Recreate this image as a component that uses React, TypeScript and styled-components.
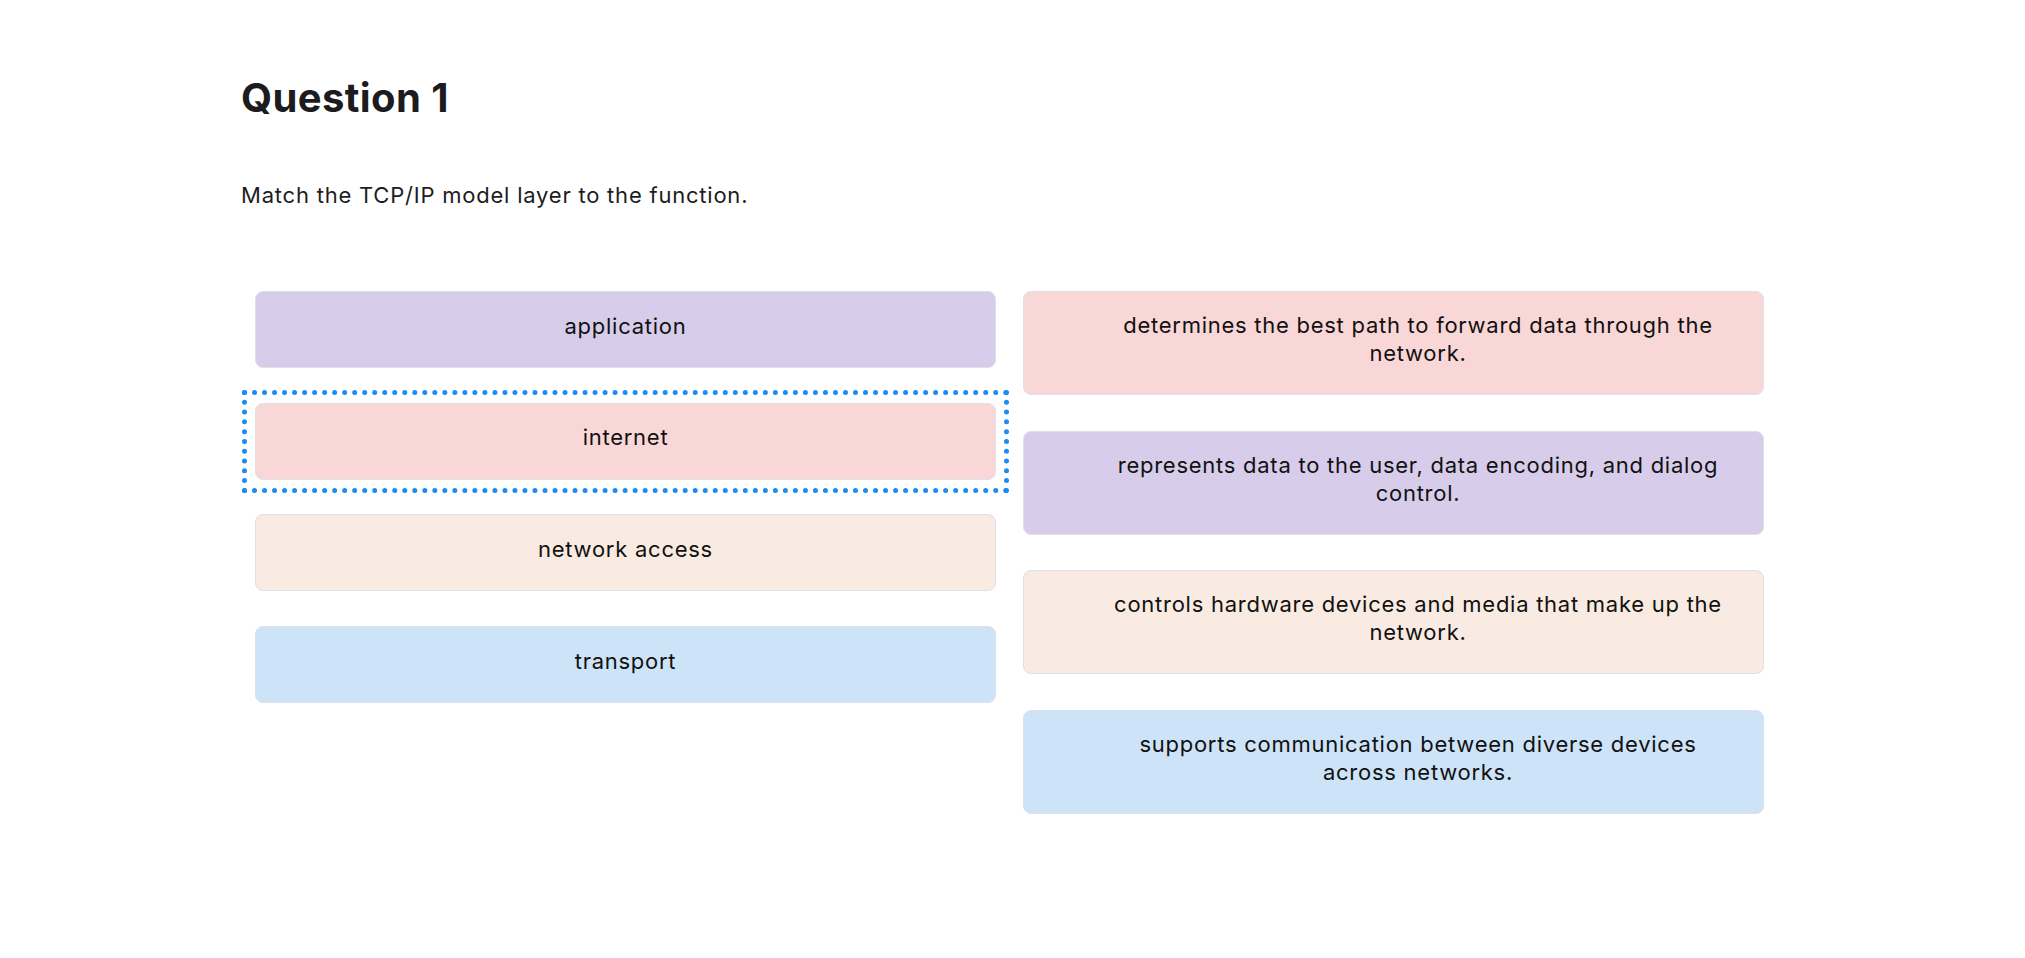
import React from "react";
import styled, { createGlobalStyle } from "styled-components";

type Tone = "purple" | "pink" | "beige" | "blue";

const tones: Record<Tone, string> = {
    purple: "#d7cdeb",
    pink: "#f9d7d6",
    beige: "#f9ebe1",
    blue: "#cde3f8",
};

const GlobalStyle = createGlobalStyle`
    html, body {
        margin: 0;
        padding: 0;
        background: #ffffff;
    }

    body {
        font-family: Inter, "Noto Sans", sans-serif;
        color: #1d1d21;
    }
`;

const Page = styled.main`
    padding: 74px 0 0 241px;
`;

const Title = styled.h1`
    margin: 0;
    font-size: 40px;
    font-weight: 700;
    line-height: 48px;
    letter-spacing: 0.4px;
    color: #1b1b20;
`;

const Prompt = styled.p`
    margin: 59px 0 0;
    font-size: 22px;
    line-height: 28px;
    letter-spacing: 0.78px;
`;

const Board = styled.div`
    display: grid;
    grid-template-columns: 741px 741px;
    column-gap: 27px;
    align-items: start;
    margin: 82px 0 0 14px;
`;

const Column = styled.div<{ $gap: number }>`
    display: flex;
    flex-direction: column;
    gap: ${(p) => p.$gap}px;
`;

const Tile = styled.div<{ $tone: Tone; $focused?: boolean }>`
    position: relative;
    box-sizing: border-box;
    display: flex;
    align-items: center;
    justify-content: center;
    border: 1px solid #dfe0e8;
    border-radius: 8px;
    background: ${(p) => tones[p.$tone]};
    color: #111111;
    font-size: 22px;
    line-height: 28px;
    letter-spacing: 0.74px;
    text-align: center;
    cursor: grab;

    /* keyboard focus ring: square dotted box around the tile */
    &::after {
        content: "";
        display: ${(p) => (p.$focused ? "block" : "none")};
        position: absolute;
        inset: -14px;
        border: 5px dotted #1a8cf5;
        pointer-events: none;
    }
`;

const LayerTile = styled(Tile)`
    height: 77px;
    padding: 0 20px 8px;
`;

const FunctionTile = styled(Tile)`
    height: 104px;
    padding: 0 36px 8px 85px;
`;

const layers: { label: string; tone: Tone }[] = [
    { label: "application", tone: "purple" },
    { label: "internet", tone: "pink" },
    { label: "network access", tone: "beige" },
    { label: "transport", tone: "blue" },
];

const functions: { label: string; tone: Tone }[] = [
    { label: "determines the best path to forward data through the network.", tone: "pink" },
    { label: "represents data to the user, data encoding, and dialog control.", tone: "purple" },
    { label: "controls hardware devices and media that make up the network.", tone: "beige" },
    { label: "supports communication between diverse devices across networks.", tone: "blue" },
];

export default function App() {
    return (
        <>
            <GlobalStyle />
            <Page>
                <Title>Question 1</Title>
                <Prompt>Match the TCP/IP model layer to the function.</Prompt>

                <Board>
                    <Column $gap={34.7}>
                        {layers.map((layer, i) => (
                            <LayerTile key={layer.label} $tone={layer.tone} $focused={i === 1}>
                                {layer.label}
                            </LayerTile>
                        ))}
                    </Column>
                    <Column $gap={35.5}>
                        {functions.map((fn) => (
                            <FunctionTile key={fn.label} $tone={fn.tone}>
                                {fn.label}
                            </FunctionTile>
                        ))}
                    </Column>
                </Board>
            </Page>
        </>
    );
}
